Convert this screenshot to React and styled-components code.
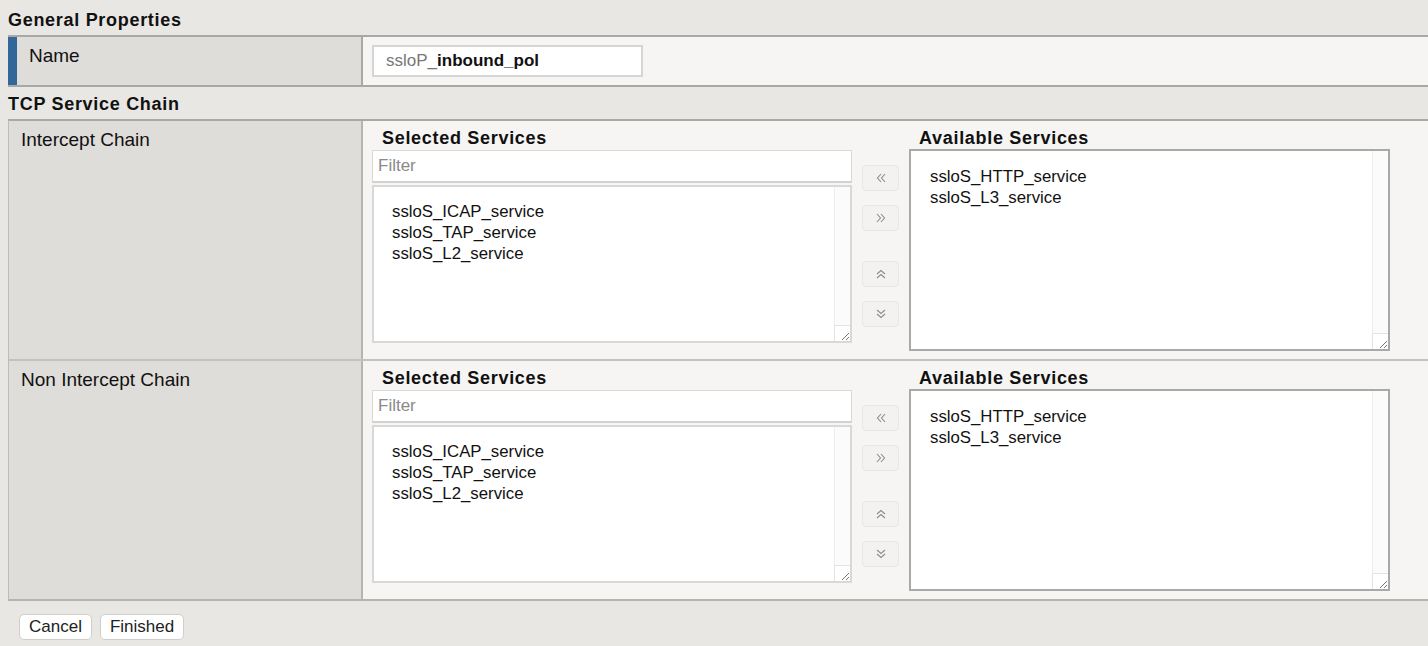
import React from "react";
import styled, { createGlobalStyle } from "styled-components";

const Global = createGlobalStyle`
  html, body { margin: 0; padding: 0; }
  body {
    background: #e9e7e3;
    font-family: "Liberation Sans", Arial, Helvetica, sans-serif;
    color: #111;
    overflow: hidden;
  }
`;

const Page = styled.div`
  padding-left: 8px;
  width: 1420px;
`;

const SectionTitle = styled.div`
  height: ${(p) => p.$h}px;
  box-sizing: border-box;
  padding-top: ${(p) => p.$pt}px;
  font-size: 18px;
  line-height: 22px;
  font-weight: bold;
  letter-spacing: 0.7px;
  color: #111;
`;

const NameRow = styled.div`
  display: grid;
  grid-template-columns: 355px 1fr;
  border-top: 2px solid #a8a8a6;
  border-bottom: 2px solid #a8a8a6;
  height: 48px;
`;

const NameLabel = styled.div`
  background: #dfddd9;
  border-left: 9px solid #336699;
  border-right: 2px solid #a8a8a6;
  padding: 8px 0 0 12px;
  font-size: 19px;
  line-height: 22px;
`;

const NameValue = styled.div`
  background: #f6f5f3;
  padding: 8px 0 0 9px;
`;

const NameInput = styled.div`
  width: 271px;
  height: 32px;
  box-sizing: border-box;
  border: 2px solid #d6d5d3;
  background: #fff;
  padding-left: 12px;
  font-size: 17px;
  line-height: 28px;
  color: #111;
`;

const Prefix = styled.span`
  color: #777;
`;

const Strong = styled.span`
  font-weight: bold;
`;

const Table = styled.div`
  border-top: 2px solid #a8a8a6;
  border-bottom: 2px solid #b5b4b1;
  border-left: 1px solid #bdbcb9;
`;

const ChainRow = styled.div`
  display: grid;
  grid-template-columns: 354px 1fr;
  height: 238px;
  & + & {
    border-top: 2px solid #c3c2bf;
  }
`;

const ChainLabel = styled.div`
  background: #dfddd9;
  border-right: 2px solid #b5b4b1;
  padding: 8px 0 0 12px;
  font-size: 19px;
  line-height: 22px;
`;

const ChainValue = styled.div`
  background: #f6f5f3;
  padding-left: 9px;
  display: flex;
  gap: 10px;
`;

const Column = styled.div`
  display: flex;
  flex-direction: column;
  width: ${(p) => p.$w}px;
`;

const ColHeading = styled.div`
  height: ${(p) => p.$h}px;
  box-sizing: border-box;
  padding: 6px 0 0 10px;
  font-size: 18px;
  line-height: 22px;
  font-weight: bold;
  letter-spacing: 0.7px;
  white-space: nowrap;
`;

const Filter = styled.div`
  height: 33px;
  box-sizing: border-box;
  background: #fff;
  border: 1px solid #d9d8d6;
  border-bottom: 2px solid #d2d1cf;
  padding-left: 5px;
  font-size: 17px;
  line-height: 30px;
  color: #8a8a8a;
`;

const ListBox = styled.div`
  position: relative;
  height: ${(p) => p.$h}px;
  margin-top: ${(p) => p.$mt}px;
  box-sizing: border-box;
  background: #fff;
  border: ${(p) => (p.$dark ? "2px solid #a9a9a7" : "2px solid #d9d8d6")};
  padding: ${(p) => p.$pad};
`;

const Item = styled.div`
  font-size: 16.8px;
  line-height: 21px;
  color: #111;
  white-space: nowrap;
`;

const Gutter = styled.div`
  position: absolute;
  top: 0;
  right: 0;
  bottom: 0;
  width: 15px;
  background: #fbfbfb;
  border-left: 1px solid #ececec;
`;

const Corner = styled.div`
  position: absolute;
  right: 0;
  bottom: 0;
  width: 16px;
  height: 16px;
  box-sizing: border-box;
  background: #fff;
  border-left: 1px solid #e3e3e3;
  border-top: 1px solid #e3e3e3;
  display: flex;
  align-items: flex-end;
  justify-content: flex-end;
`;

const ButtonColumn = styled.div`
  display: flex;
  flex-direction: column;
  width: 37px;
  padding-top: 44px;
`;

const ArrowButton = styled.div`
  width: 37px;
  height: 26px;
  box-sizing: border-box;
  margin-top: ${(p) => p.$mt}px;
  background: #f3f2f0;
  border: 1px solid #e8e7e4;
  border-radius: 4px;
  display: flex;
  align-items: center;
  justify-content: center;
  color: #8a8a8a;
`;

const Footer = styled.div`
  display: flex;
  gap: 8px;
  padding: 13px 0 0 11px;
`;

const Button = styled.div`
  height: 26px;
  box-sizing: border-box;
  padding: 0 9px;
  background: #fff;
  border: 1px solid #cfcecb;
  border-radius: 5px;
  font-size: 17px;
  line-height: 24px;
  color: #222;
`;

const Grip = () => (
  <svg width="10" height="10" viewBox="0 0 10 10">
    <path d="M2 9 L9 2 M6 9 L9 6" stroke="#777" strokeWidth="1" fill="none" />
  </svg>
);

const Chevron = ({ dir }) => {
  const paths = {
    left: "M5 1 L1.5 5 L5 9 M9 1 L5.5 5 L9 9",
    right: "M1 1 L4.5 5 L1 9 M5 1 L8.5 5 L5 9",
    up: "M1 5 L5 1.5 L9 5 M1 9 L5 5.5 L9 9",
    down: "M1 1 L5 4.5 L9 1 M1 5 L5 8.5 L9 5",
  };
  return (
    <svg width="10" height="10" viewBox="0 0 10 10">
      <path d={paths[dir]} stroke="#8c8c8c" strokeWidth="1.1" fill="none" />
    </svg>
  );
};

const selected = ["ssloS_ICAP_service", "ssloS_TAP_service", "ssloS_L2_service"];
const available = ["ssloS_HTTP_service", "ssloS_L3_service"];

const Chain = ({ label }) => (
  <ChainRow>
    <ChainLabel>{label}</ChainLabel>
    <ChainValue>
      <Column $w={480}>
        <ColHeading $h={29}>Selected Services</ColHeading>
        <Filter>Filter</Filter>
        <ListBox $h={158} $mt={2} $pad="14px 0 0 18px">
          {selected.map((s) => (
            <Item key={s}>{s}</Item>
          ))}
          <Gutter />
          <Corner>
            <Grip />
          </Corner>
        </ListBox>
      </Column>
      <ButtonColumn>
        <ArrowButton $mt={0}>
          <Chevron dir="left" />
        </ArrowButton>
        <ArrowButton $mt={14}>
          <Chevron dir="right" />
        </ArrowButton>
        <ArrowButton $mt={30}>
          <Chevron dir="up" />
        </ArrowButton>
        <ArrowButton $mt={14}>
          <Chevron dir="down" />
        </ArrowButton>
      </ButtonColumn>
      <Column $w={481}>
        <ColHeading $h={28}>Available Services</ColHeading>
        <ListBox $h={202} $mt={0} $dark $pad="15px 0 0 19px">
          {available.map((s) => (
            <Item key={s}>{s}</Item>
          ))}
          <Gutter />
          <Corner>
            <Grip />
          </Corner>
        </ListBox>
      </Column>
    </ChainValue>
  </ChainRow>
);

export default function App() {
  return (
    <>
      <Global />
      <Page>
        <SectionTitle $h={35} $pt={9}>General Properties</SectionTitle>
        <NameRow>
          <NameLabel>Name</NameLabel>
          <NameValue>
            <NameInput>
              <Prefix>ssloP_</Prefix>
              <Strong>inbound_pol</Strong>
            </NameInput>
          </NameValue>
        </NameRow>
        <SectionTitle $h={32} $pt={6}>TCP Service Chain</SectionTitle>
        <Table>
          <Chain label="Intercept Chain" />
          <Chain label="Non Intercept Chain" />
        </Table>
        <Footer>
          <Button>Cancel</Button>
          <Button>Finished</Button>
        </Footer>
      </Page>
    </>
  );
}
